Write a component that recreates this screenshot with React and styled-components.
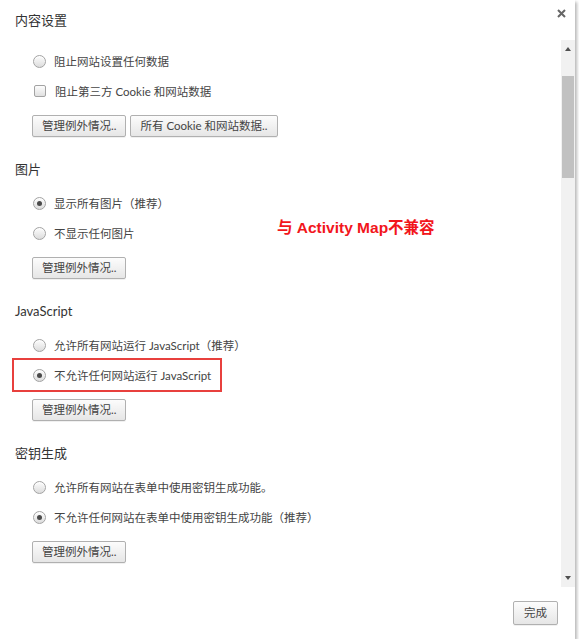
import React from "react";
import styled, { createGlobalStyle, css } from "styled-components";

const font = `"Lato", "Noto Sans CJK SC", "Noto Sans", sans-serif`;

const GlobalStyle = createGlobalStyle`
  html, body {
    margin: 0;
    padding: 0;
    background: #ffffff;
  }
  body {
    font-family: ${font};
    color: #333;
  }
`;

const Dialog = styled.div`
  width: 575px;
  height: 639px;
  background: #fff;
  box-shadow: 2px 2px 3px rgba(0, 0, 0, 0.28);
  display: flex;
  flex-direction: column;
`;

const Header = styled.div`
  height: 40px;
  flex: none;
  display: flex;
  justify-content: space-between;
  align-items: center;
  padding: 0 9px 0 15px;
`;

const Title = styled.div`
  font-size: 13px;
  line-height: 20px;
  color: #333;
`;

const Close = styled.button`
  align-self: flex-start;
  margin-top: 9px;
  width: 9px;
  height: 9px;
  padding: 0;
  border: 0;
  background: none;
  display: flex;
`;

const Body = styled.div`
  flex: 1;
  display: flex;
  min-height: 0;
`;

const Content = styled.div`
  flex: 1;
  position: relative;
  padding: 6px 0 0 15px;
  overflow: hidden;
`;

const Section = styled.section`
  margin-bottom: 22px;
`;

const Heading = styled.div`
  font-size: 13px;
  line-height: 20px;
  height: 20px;
  color: #333;
  margin-bottom: 9px;
`;

const Option = styled.div`
  display: flex;
  align-items: center;
  height: 30px;
  width: fit-content;
  padding: 0 ${(p) => (p.$marked ? "9px" : "0")} 0 18px;
  font-size: 11.5px;
  color: #444;
  ${(p) =>
    p.$marked &&
    css`
      outline: 2px solid #e8403d;
      margin-left: -1px;
      padding-left: 19px;
    `}
`;

const Radio = styled.span`
  width: 13px;
  height: 13px;
  box-sizing: border-box;
  border-radius: 50%;
  border: 1px solid #a3a3a3;
  background: linear-gradient(#fdfdfd, #dcdcdc);
  box-shadow: inset 0 1px 1px rgba(255, 255, 255, 0.9);
  margin-right: 8px;
  display: flex;
  align-items: center;
  justify-content: center;
  &::after {
    content: "";
    width: 5px;
    height: 5px;
    border-radius: 50%;
    background: #4a4a4a;
    display: ${(p) => (p.$checked ? "block" : "none")};
  }
`;

const Check = styled.span`
  width: 12px;
  height: 12px;
  box-sizing: border-box;
  border-radius: 2px;
  border: 1px solid #a3a3a3;
  background: linear-gradient(#fdfdfd, #e0e0e0);
  margin-right: 9px;
  margin-left: 1px;
`;

const Buttons = styled.div`
  display: flex;
  gap: 4px;
  margin: 9px 0 0 17px;
`;

const Button = styled.button`
  height: 22px;
  box-sizing: border-box;
  padding: 0 9px;
  border: 1px solid #b0b0b0;
  border-radius: 2px;
  background: linear-gradient(#fcfcfc, #e6e6e6);
  box-shadow: 0 1px 0 rgba(0, 0, 0, 0.06);
  font-family: ${font};
  font-size: 11.5px;
  color: #444;
  line-height: 20px;
`;

const Note = styled.div`
  position: absolute;
  left: 277px;
  top: 178px;
  font-family: "Liberation Sans", "Noto Sans CJK SC", sans-serif;
  font-weight: bold;
  font-size: 15.5px;
  line-height: 20px;
  color: #f2161c;
`;

const Track = styled.div`
  width: 14px;
  flex: none;
  background: #f1f1f1;
  display: flex;
  flex-direction: column;
  align-items: center;
`;

const Arrow = styled.div`
  height: 18px;
  flex: none;
  display: flex;
  align-items: center;
  justify-content: center;
  &::after {
    content: "";
    border-left: 3.5px solid transparent;
    border-right: 3.5px solid transparent;
    ${(p) =>
      p.$down
        ? "border-top: 4px solid #505050;"
        : "border-bottom: 4px solid #505050;"}
  }
`;

const Thumb = styled.div`
  width: 12px;
  height: 102px;
  margin-top: 18px;
  background: #c1c1c1;
`;

const Spacer = styled.div`
  flex: 1;
`;

const Footer = styled.div`
  height: 52px;
  flex: none;
  display: flex;
  justify-content: flex-end;
  align-items: center;
  padding-right: 17px;
`;

const DoneButton = styled(Button)`
  height: 24px;
  padding: 0 10px;
  margin-bottom: 1px;
`;

const sections = [
  {
    title: "图片",
    options: [
      { type: "radio", label: "显示所有图片（推荐）", checked: true },
      { type: "radio", label: "不显示任何图片" },
    ],
  },
  {
    title: "JavaScript",
    options: [
      { type: "radio", label: "允许所有网站运行 JavaScript（推荐）" },
      { type: "radio", label: "不允许任何网站运行 JavaScript", checked: true, marked: true },
    ],
  },
  {
    title: "密钥生成",
    options: [
      { type: "radio", label: "允许所有网站在表单中使用密钥生成功能。" },
      { type: "radio", label: "不允许任何网站在表单中使用密钥生成功能（推荐）", checked: true },
    ],
  },
];

function OptionRow({ type, label, checked, marked }) {
  return (
    <Option $marked={marked}>
      {type === "check" ? <Check /> : <Radio $checked={checked} />}
      {label}
    </Option>
  );
}

export default function App() {
  return (
    <>
      <GlobalStyle />
      <Dialog>
        <Header>
          <Title>内容设置</Title>
          <Close aria-label="关闭">
            <svg width="9" height="9" viewBox="0 0 9 9">
              <path d="M1 1L8 8M8 1L1 8" stroke="#666" strokeWidth="2" />
            </svg>
          </Close>
        </Header>
        <Body>
          <Content>
            <Section>
              <OptionRow type="radio" label="阻止网站设置任何数据" />
              <OptionRow type="check" label="阻止第三方 Cookie 和网站数据" />
              <Buttons>
                <Button>管理例外情况..</Button>
                <Button>所有 Cookie 和网站数据..</Button>
              </Buttons>
            </Section>
            {sections.map((s) => (
              <Section key={s.title}>
                <Heading>{s.title}</Heading>
                {s.options.map((o) => (
                  <OptionRow key={o.label} {...o} />
                ))}
                <Buttons>
                  <Button>管理例外情况..</Button>
                </Buttons>
              </Section>
            ))}
            <Note>与 Activity Map不兼容</Note>
          </Content>
          <Track>
            <Arrow />
            <Thumb />
            <Spacer />
            <Arrow $down />
          </Track>
        </Body>
        <Footer>
          <DoneButton>完成</DoneButton>
        </Footer>
      </Dialog>
    </>
  );
}
